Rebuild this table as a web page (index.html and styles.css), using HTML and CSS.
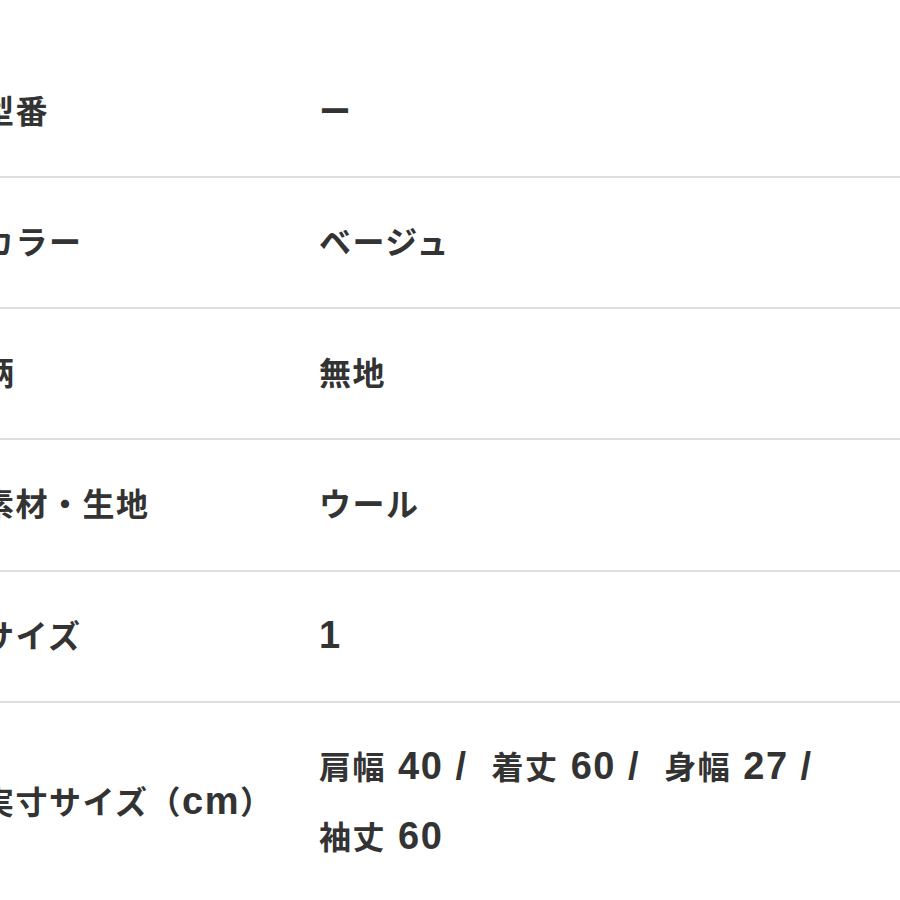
FILE: index.html
```html
<!DOCTYPE html>
<html lang="ja">
<head>
<meta charset="utf-8">
<link rel="stylesheet" href="styles.css">
</head>
<body>
<div class="spec">
  <div class="row"><div class="label">型番</div><div class="value">ー</div></div>
  <div class="row"><div class="label">カラー</div><div class="value">ベージュ</div></div>
  <div class="row"><div class="label">柄</div><div class="value">無地</div></div>
  <div class="row"><div class="label">素材・生地</div><div class="value">ウール</div></div>
  <div class="row"><div class="label">サイズ</div><div class="value"><span class="num">1</span></div></div>
  <div class="row">
    <div class="label">実寸サイズ（<span class="num">cm</span>）</div>
    <div class="value"><span class="item">肩幅<span class="num"> 40 /</span></span><span class="num">&nbsp; </span><span class="item">着丈<span class="num"> 60 /</span></span><span class="num">&nbsp; </span><span class="item">身幅<span class="num"> 27 /</span></span><span class="num">&nbsp; </span><span class="item">袖丈<span class="num"> 60</span></span></div>
  </div>
</div>
</body>
</html>
```
FILE: styles.css
```css
html, body {
  margin: 0;
  padding: 0;
  background: #ffffff;
  overflow: hidden;
}
body {
  font-family: "Liberation Sans", "Noto Sans CJK JP", sans-serif;
  font-weight: bold;
  font-size: 32px;
  letter-spacing: 1.5px;
  color: #333333;
}
.spec {
  margin-left: -18px;
  padding-top: 46.5px;
  width: 918px;
}
.row {
  display: grid;
  grid-template-columns: 337px 1fr;
  align-items: center;
  padding: 30px 0 29.25px;
  line-height: 70px;
}
.row + .row {
  border-top: 2px solid #dedede;
}
.num {
  font-size: 38px;
  line-height: 1;
}
.item {
  white-space: nowrap;
}
```
